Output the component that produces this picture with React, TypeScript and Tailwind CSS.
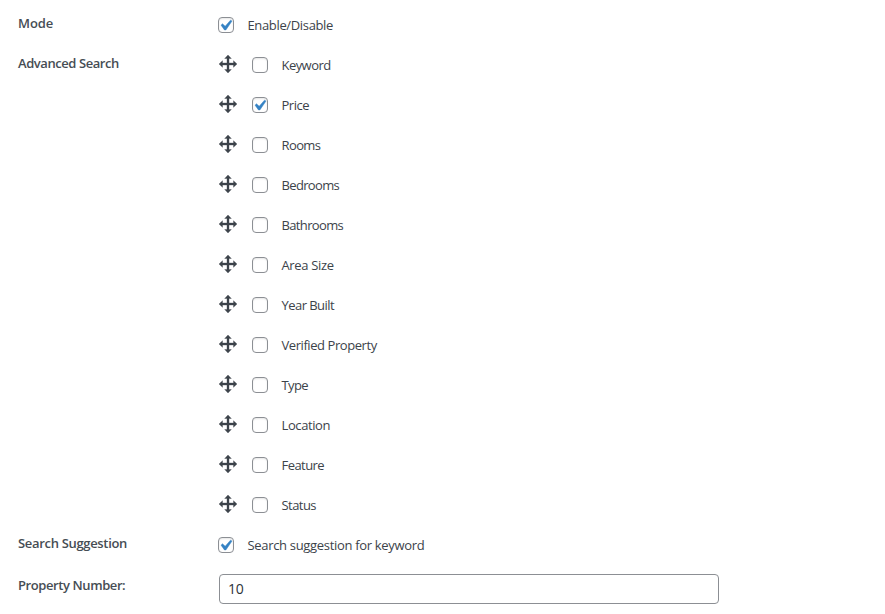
import { useState, type ReactNode } from 'react';

type Field = { label: string; tracking: string; checked?: boolean };

const fields: Field[] = [
  { label: 'Keyword', tracking: 'tracking-[-0.55px]' },
  { label: 'Price', tracking: 'tracking-[-0.5px]', checked: true },
  { label: 'Rooms', tracking: 'tracking-[-0.6px]' },
  { label: 'Bedrooms', tracking: 'tracking-[-0.65px]' },
  { label: 'Bathrooms', tracking: 'tracking-[-0.65px]' },
  { label: 'Area Size', tracking: 'tracking-[-0.35px]' },
  { label: 'Year Built', tracking: 'tracking-[-0.55px]' },
  { label: 'Verified Property', tracking: 'tracking-[-0.43px]' },
  { label: 'Type', tracking: 'tracking-[-0.6px]' },
  { label: 'Location', tracking: 'tracking-[-0.4px]' },
  { label: 'Feature', tracking: 'tracking-[-0.55px]' },
  { label: 'Status', tracking: 'tracking-[-0.55px]' },
];

function MoveIcon() {
  return (
    <svg
      className="mb-0.5 h-5 w-5 shrink-0 cursor-move fill-[#3c434a] stroke-[#3c434a] stroke-[0.35]"
      viewBox="0 0 20 20"
    >
      <path d="M19 10l-3.5 3.3V11H11v4.5h2.3L10 19l-3.300-3.500H9V11H4.500v2.300L1 10l3.500-3.300V9H9V4.500H6.700L10 1l3.300 3.500H11V9h4.500V6.700z" />
    </svg>
  );
}

function Checkbox({ initial = false, label }: { initial?: boolean; label: string }) {
  const [on, setOn] = useState(initial);
  return (
    <button
      type="button"
      role="checkbox"
      aria-checked={on}
      aria-label={label}
      onClick={() => setOn(!on)}
      className="h-4 w-4 shrink-0 rounded-[4px] border border-[#8c8f94] bg-white shadow-[inset_0_1px_2px_rgba(0,0,0,0.1)]"
    >
      {on && (
        <svg
          className="-mt-[3px] -ml-1 h-[21px] w-[21px] max-w-none fill-[#3582c4] stroke-[#3582c4] stroke-[0.5]"
          viewBox="0 0 20 20"
        >
          <path d="M14.83 4.89l1.34.94-5.81 8.38H9.02L5.78 9.67l1.34-1.25 2.57 2.4z" />
        </svg>
      )}
    </button>
  );
}

function Label({ children, className }: { children: ReactNode; className: string }) {
  return (
    <div className={`w-[200px] shrink-0 text-[13px] leading-5 font-semibold text-[#464d54] ${className}`}>
      {children}
    </div>
  );
}

export default function App() {
  return (
    <div className="h-[614px] w-[885px] overflow-hidden bg-white pt-[5px] pl-[18px] font-['Open_Sans','Noto_Sans',sans-serif] text-[13px] text-[#3c434a]">
      <div className="flex h-10">
        <Label className="pt-2 tracking-[-0.1px]">Mode</Label>
        <div className="flex h-10 items-center gap-[13.5px]">
          <Checkbox initial label="Enable/Disable" />
          <span className="pt-0.5 tracking-[-0.35px]">Enable/Disable</span>
        </div>
      </div>
      <div className="flex">
        <Label className="pt-2 tracking-[-0.43px]">Advanced Search</Label>
        <ul>
          {fields.map((f) => (
            <li key={f.label} className="flex h-10 items-center">
              <MoveIcon />
              <div className="ml-[14px] flex items-center gap-[13.5px]">
                <Checkbox initial={f.checked} label={f.label} />
                <span className={`pt-0.5 ${f.tracking}`}>{f.label}</span>
              </div>
            </li>
          ))}
        </ul>
      </div>
      <div className="flex h-10">
        <Label className="pt-2 tracking-[-0.32px]">Search Suggestion</Label>
        <div className="flex h-10 items-center gap-[13.5px]">
          <Checkbox initial label="Search suggestion for keyword" />
          <span className="pt-0.5 tracking-[-0.32px]">Search suggestion for keyword</span>
        </div>
      </div>
      <div className="flex pt-[9px]">
        <Label className="pt-px tracking-[-0.41px]">Property Number:</Label>
        <input
          type="text"
          defaultValue="10"
          aria-label="Property Number"
          className="ml-px h-[30px] w-[500px] rounded-[4px] border border-[#8c8f94] bg-white px-2 pb-0.5 text-[14px] tracking-[-0.3px] text-[#2c3338] outline-none"
        />
      </div>
    </div>
  );
}
